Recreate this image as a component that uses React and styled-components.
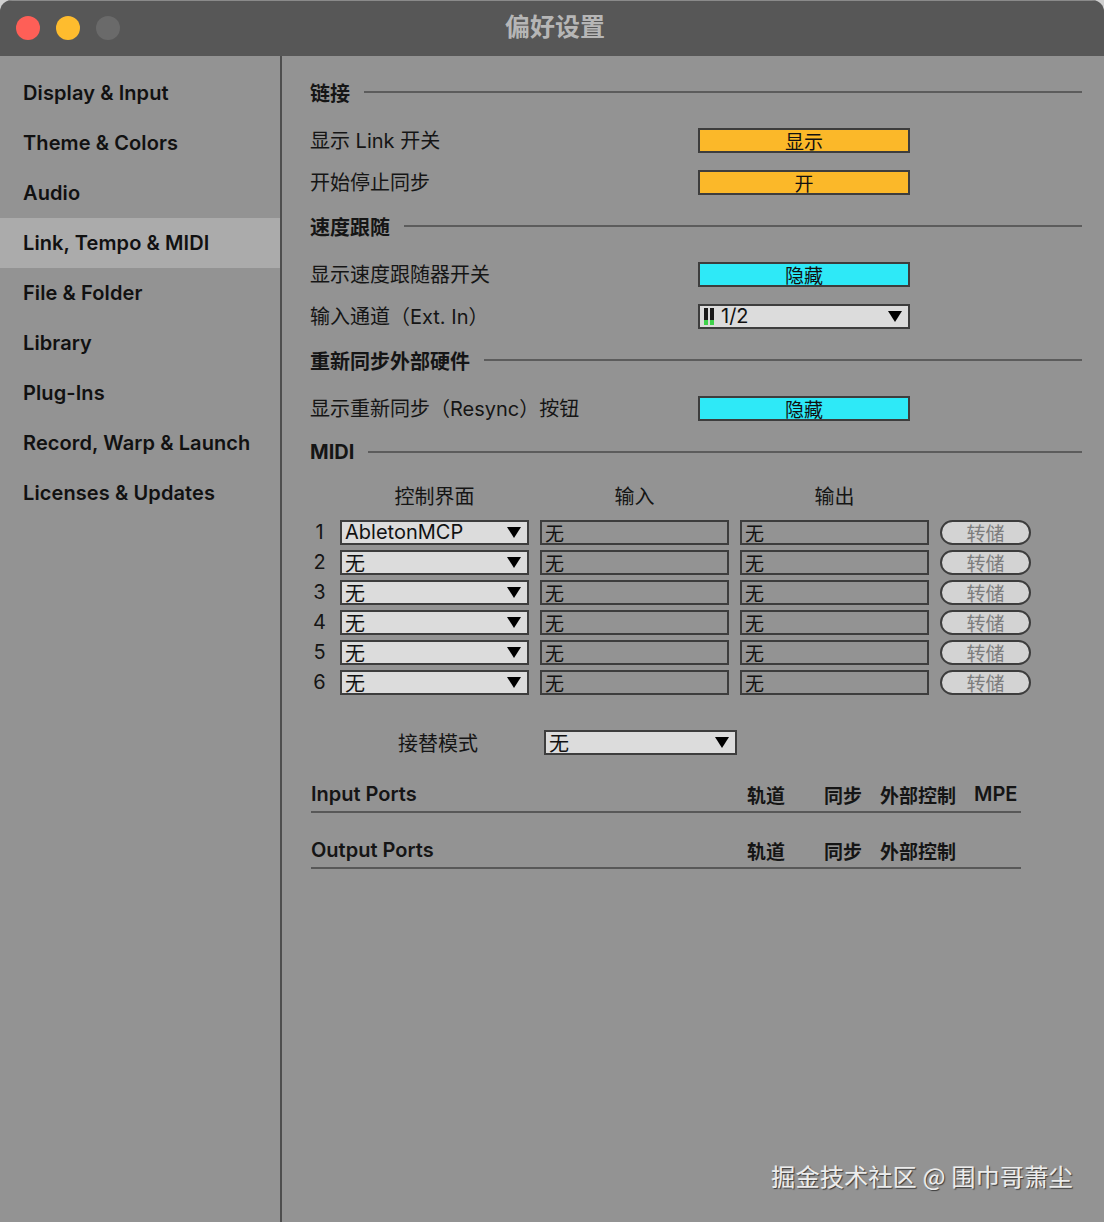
import React from "react";
import styled, { createGlobalStyle } from "styled-components";

const GlobalStyle = createGlobalStyle`
  html, body { margin: 0; padding: 0; background: #cfcfcf; }
  body { font-family: Inter, "Noto Sans CJK SC", sans-serif; }
  * { box-sizing: border-box; }
`;

const CJK = `Inter, "Noto Sans CJK SC", sans-serif`;

const Window = styled.div`
  width: 1104px;
  height: 1222px;
  display: flex;
  flex-direction: column;
  border-radius: 12px 12px 0 0;
  overflow: hidden;
  background: #939393;
  position: relative;
`;

const TitleBar = styled.div`
  height: 56px;
  flex: none;
  background: #575757;
  display: flex;
  align-items: center;
  padding-left: 16px;
  position: relative;
  border-top: 1px solid #8a8a8a;
`;

const Lights = styled.div`
  display: flex;
  gap: 16px;
  margin-top: -2px;
`;

const Light = styled.span`
  width: 24px;
  height: 24px;
  border-radius: 50%;
  background: ${(p) => p.$c};
`;

const Title = styled.div`
  position: absolute;
  left: 0;
  right: 0;
  top: 9px;
  text-align: center;
  font-family: ${CJK};
  font-weight: 700;
  font-size: 25px;
  line-height: 34px;
  color: #b6b6b6;
  pointer-events: none;
  padding-left: 6px;
`;

const Body = styled.div`
  flex: 1;
  display: flex;
`;

const Sidebar = styled.nav`
  width: 282px;
  flex: none;
  border-right: 2px solid #4e4e4e;
  padding-top: 12px;
  display: flex;
  flex-direction: column;
`;

const NavItem = styled.div`
  height: 50px;
  display: flex;
  align-items: center;
  padding-left: 23px;
  font-family: Inter, sans-serif;
  font-weight: 600;
  font-size: 20px;
  color: #111;
  letter-spacing: 0.1px;
  background: ${(p) => (p.$active ? "#ababab" : "transparent")};
`;

const Content = styled.main`
  flex: 1;
  padding: 13px 22px 0 28px;
  display: flex;
  flex-direction: column;
  font-family: ${CJK};
  color: #151515;
`;

const SectionHeader = styled.div`
  height: 46px;
  margin-bottom: ${(p) => (p.$tight ? "0" : "4px")};
  display: flex;
  align-items: center;
  gap: 14px;
  font-weight: 700;
  font-size: 20px;
  &::after {
    content: "";
    flex: 1;
    height: 2px;
    background: #5c5c5c;
  }
`;

const SettingRow = styled.div`
  height: 42px;
  display: flex;
  align-items: center;
  font-size: 20px;
`;

const RowLabel = styled.div`
  width: 388px;
  flex: none;
  margin-top: -2px;
`;

const ToggleBtn = styled.div`
  width: 212px;
  height: 25px;
  border: 2px solid #3d3d3d;
  background: ${(p) => p.$bg};
  display: flex;
  align-items: center;
  justify-content: center;
  font-size: 19px;
  color: #111;
`;

const Select = styled.div`
  width: ${(p) => p.$w || 189}px;
  height: 25px;
  border: 2px solid #3d3d3d;
  background: #dcdcdc;
  display: flex;
  align-items: center;
  padding: 0 6px 0 3px;
  gap: 6px;
  font-size: 20px;
  color: #111;
`;

const SelectText = styled.span`
  flex: 1;
  white-space: nowrap;
  overflow: hidden;
`;

const Arrow = styled.svg`
  width: 14px;
  height: 11px;
  flex: none;
`;

const Field = styled.div`
  width: 189px;
  height: 25px;
  border: 2px solid #3d3d3d;
  background: #939393;
  display: flex;
  align-items: center;
  padding: 0 3px;
  font-size: 19px;
  color: #111;
`;

const Pill = styled.div`
  width: 91px;
  height: 25px;
  border: 2px solid #3d3d3d;
  border-radius: 13px;
  background: #d3d3d3;
  display: flex;
  align-items: center;
  justify-content: center;
  font-size: 19px;
  color: #7c7c7c;
`;

const MidiTable = styled.div`
  margin-top: 7px;
  display: grid;
  grid-template-columns: 19px 189px 189px 189px 91px;
  grid-template-rows: 35px repeat(6, 30px);
  column-gap: 11px;
  align-items: center;
  font-size: 20px;
`;

const ColHead = styled.div`
  text-align: center;
  align-self: start;
  line-height: 30px;
`;

const RowNum = styled.div`
  text-align: center;
  font-size: 20px;
`;

const TakeoverRow = styled.div`
  margin-top: 30px;
  height: 30px;
  display: flex;
  align-items: center;
  font-size: 20px;
  padding-left: 88px;
  gap: 66px;
`;

const PortHeader = styled.div`
  margin-top: ${(p) => p.$mt}px;
  width: 710px;
  margin-left: 1px;
  height: 36px;
  border-bottom: 2px solid #585858;
  display: grid;
  grid-template-columns: 1fr 77px 56px 94px 47px;
  align-items: center;
  font-weight: 700;
  font-size: 19px;
`;

const PortTitle = styled.span`
  font-family: Inter, sans-serif;
  font-weight: 600;
  font-size: 20px;
`;

const Meter = styled.svg`
  width: 12px;
  height: 17px;
  flex: none;
`;

const Watermark = styled.div`
  position: absolute;
  right: 31px;
  bottom: 29px;
  font-family: "Noto Sans CJK SC", sans-serif;
  font-size: 24px;
  color: #ececec;
  text-shadow: 1px 1px 1px #3a3a3a, -0.5px -0.5px 0 #bdbdbd;
  letter-spacing: 0.3px;
`;

const DownArrow = () => (
  <Arrow viewBox="0 0 14 11">
    <polygon points="0,0 14,0 7,11" fill="#000" />
  </Arrow>
);

const navItems = [
  "Display & Input",
  "Theme & Colors",
  "Audio",
  "Link, Tempo & MIDI",
  "File & Folder",
  "Library",
  "Plug-Ins",
  "Record, Warp & Launch",
  "Licenses & Updates",
];

const midiRows = ["AbletonMCP", "无", "无", "无", "无", "无"];

export default function App() {
  return (
    <>
      <GlobalStyle />
      <Window>
        <TitleBar>
          <Lights>
            <Light $c="#fe5f57" />
            <Light $c="#febc2e" />
            <Light $c="#6a6a6a" />
          </Lights>
          <Title>偏好设置</Title>
        </TitleBar>
        <Body>
          <Sidebar>
            {navItems.map((n) => (
              <NavItem key={n} $active={n === "Link, Tempo & MIDI"}>
                {n}
              </NavItem>
            ))}
          </Sidebar>
          <Content>
            <SectionHeader>链接</SectionHeader>
            <SettingRow>
              <RowLabel>显示 Link 开关</RowLabel>
              <ToggleBtn $bg="#fbb829">显示</ToggleBtn>
            </SettingRow>
            <SettingRow>
              <RowLabel>开始停止同步</RowLabel>
              <ToggleBtn $bg="#fbb829">开</ToggleBtn>
            </SettingRow>
            <SectionHeader>速度跟随</SectionHeader>
            <SettingRow>
              <RowLabel>显示速度跟随器开关</RowLabel>
              <ToggleBtn $bg="#2ee9f7">隐藏</ToggleBtn>
            </SettingRow>
            <SettingRow>
              <RowLabel>输入通道（Ext. In）</RowLabel>
              <Select $w={212}>
                <Meter viewBox="0 0 12 17">
                  <rect x="1" y="0" width="4" height="17" fill="#1a1a1a" />
                  <rect x="7" y="0" width="4" height="17" fill="#1a1a1a" />
                  <rect x="1" y="12" width="4" height="5" fill="#3fd14b" />
                  <rect x="7" y="12" width="4" height="5" fill="#3fd14b" />
                </Meter>
                <SelectText>1/2</SelectText>
                <DownArrow />
              </Select>
            </SettingRow>
            <SectionHeader>重新同步外部硬件</SectionHeader>
            <SettingRow>
              <RowLabel>显示重新同步（Resync）按钮</RowLabel>
              <ToggleBtn $bg="#2ee9f7">隐藏</ToggleBtn>
            </SettingRow>
            <SectionHeader $tight>MIDI</SectionHeader>

            <MidiTable>
              <div />
              <ColHead>控制界面</ColHead>
              <ColHead>输入</ColHead>
              <ColHead>输出</ColHead>
              <div />
              {midiRows.map((v, i) => (
                <React.Fragment key={i}>
                  <RowNum>{i + 1}</RowNum>
                  <Select>
                    <SelectText>{v}</SelectText>
                    <DownArrow />
                  </Select>
                  <Field>无</Field>
                  <Field>无</Field>
                  <Pill>转储</Pill>
                </React.Fragment>
              ))}
            </MidiTable>

            <TakeoverRow>
              <span>接替模式</span>
              <Select $w={193}>
                <SelectText>无</SelectText>
                <DownArrow />
              </Select>
            </TakeoverRow>

            <PortHeader $mt={20}>
              <PortTitle>Input Ports</PortTitle>
              <span>轨道</span>
              <span>同步</span>
              <span>外部控制</span>
              <PortTitle>MPE</PortTitle>
            </PortHeader>
            <PortHeader $mt={20}>
              <PortTitle>Output Ports</PortTitle>
              <span>轨道</span>
              <span>同步</span>
              <span>外部控制</span>
              <span />
            </PortHeader>
          </Content>
        </Body>
        <Watermark>掘金技术社区 @ 围巾哥萧尘</Watermark>
      </Window>
    </>
  );
}
